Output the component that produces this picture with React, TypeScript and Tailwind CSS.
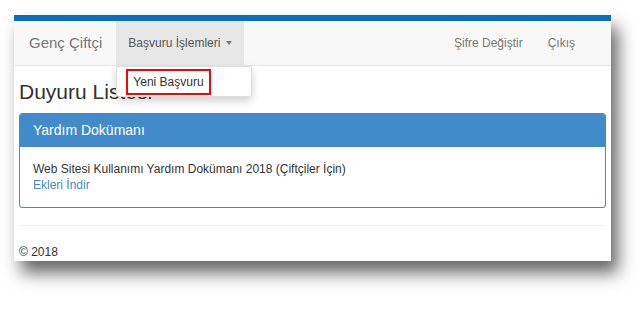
export default function App() {
  return (
    <div className="w-[639px] h-[313px] bg-white pl-[14px] pt-[15px] font-['Liberation_Sans',Arial,sans-serif]">
      <div className="w-[597px] h-[246px] bg-white border-t-[6px] border-[#0a6ebd] shadow-[7px_12px_16px_rgba(0,0,0,0.6)] flex flex-col">
        <nav className="relative h-[45px] bg-[#f8f8f8] border-b border-[#e7e7e7] flex items-stretch text-[12px] text-[#777]">
          <div className="pl-[15px] pr-[14px] flex items-center text-[15px]">Genç Çiftçi</div>
          <div className="relative bg-[#e7e7e7] w-[128px] flex items-center pl-[12px] text-[#555]">
            Başvuru İşlemleri
            <span className="ml-[6px] w-0 h-0 border-x-[3.5px] border-x-transparent border-t-[4px] border-t-[#777]" />
            <div className="absolute left-0 top-[45px] w-[136px] h-[31px] bg-white border border-[#ddd] rounded-b-[3px] shadow-[0_4px_8px_rgba(0,0,0,0.18)] z-10 flex items-center pl-[9px]">
              <span className="border-2 border-[#f00] px-[5px] py-[5px] text-[#333] leading-none">Yeni Başvuru</span>
            </div>
          </div>
          <div className="ml-auto flex items-center gap-[25px] pr-[36px]">
            <span>Şifre Değiştir</span>
            <span>Çıkış</span>
          </div>
        </nav>
        <div className="px-[5px] flex flex-col">
          <h1 className="text-[21px] text-[#333] mt-[13px] leading-[26px]">Duyuru Listesi</h1>
          <div className="mt-[8px] border border-[#428bca] rounded-[3px] overflow-hidden">
            <div className="bg-[#428bca] h-[33px] flex items-center px-[13px] text-white text-[14px]">Yardım Dokümanı</div>
            <div className="px-[13px] pt-[14px] pb-[14px] text-[12px] leading-[16px]">
              <div className="text-[#333]">Web Sitesi Kullanımı Yardım Dokümanı 2018 (Çiftçiler İçin)</div>
              <div className="text-[#428bca]">Ekleri İndir</div>
            </div>
          </div>
          <hr className="mt-[17px] border-t border-[#eee]" />
          <div className="mt-[17px] text-[12px] text-[#333]">© 2018</div>
        </div>
      </div>
    </div>
  );
}
